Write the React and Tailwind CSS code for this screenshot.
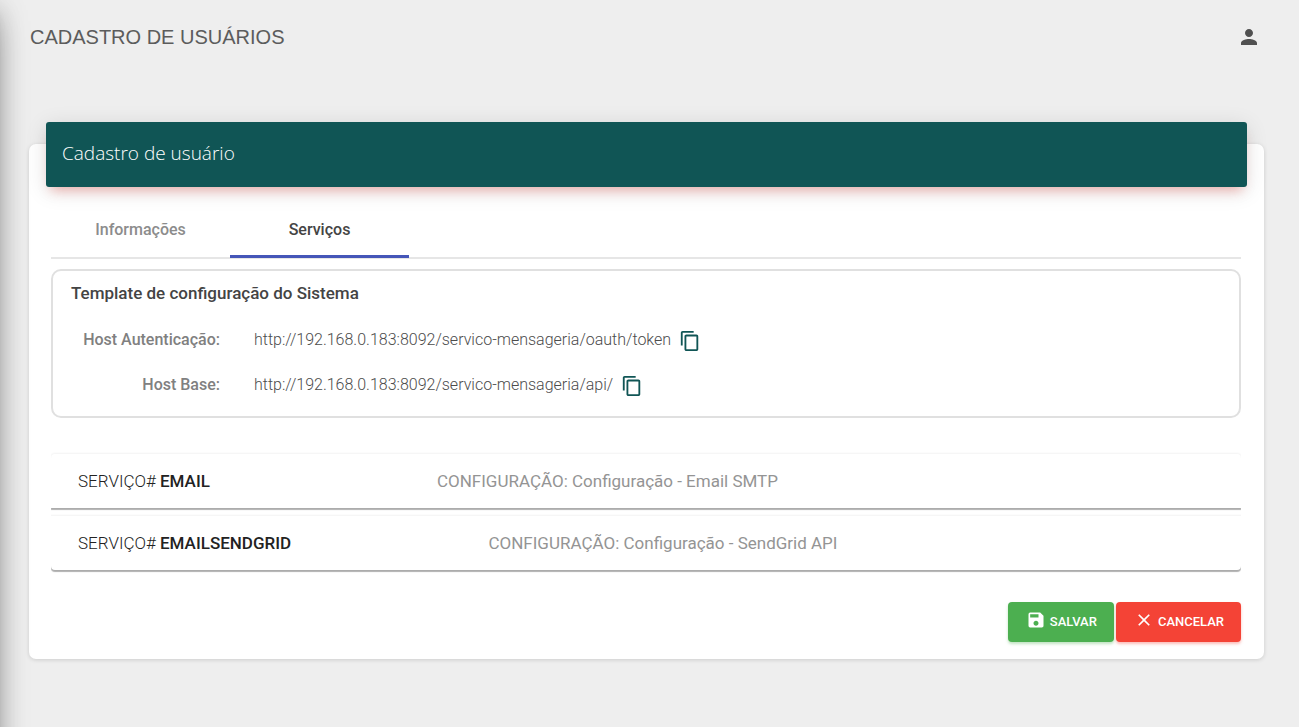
import React from "react";
import { MdPerson, MdSave, MdClose, MdContentCopy } from "react-icons/md";

const hosts = [
  { label: "Host Autenticação:", url: "http://192.168.0.183:8092/servico-mensageria/oauth/token" },
  { label: "Host Base:", url: "http://192.168.0.183:8092/servico-mensageria/api/" },
];

const services = [
  { name: "EMAIL", config: "Configuração - Email SMTP", shape: "rounded-t-[4px]" },
  { name: "EMAILSENDGRID", config: "Configuração - SendGrid API", shape: "rounded-b-[4px]" },
];

function TopBar() {
  return (
    <header className="flex h-[74px] items-center justify-between pl-[30px] pr-[38px]">
      <h1 className="font-['Liberation_Sans',sans-serif] text-[20px] leading-6 text-[#5c5c5c]">CADASTRO DE USUÁRIOS</h1>
      <button type="button" aria-label="Perfil" className="text-[#505050]">
        <MdPerson size={24} />
      </button>
    </header>
  );
}

function Tabs() {
  return (
    <div role="tablist" className="flex h-[55px] border-b-2 border-[#e6e6e6] text-[16px] font-medium">
      <button type="button" role="tab" aria-selected="false" className="w-[179px] pb-[2px] text-[#8c8c8c]">
        Informações
      </button>
      <button type="button" role="tab" aria-selected="true" className="-mb-px w-[179px] border-b-3 border-[#4556b8] text-[#444444]">
        Serviços
      </button>
    </div>
  );
}

function SystemTemplate() {
  return (
    <section className="mt-[10px] rounded-[10px] border-2 border-[#e0e0e0] pt-2 pb-[9px]">
      <h3 className="pl-[18px] text-[17px] leading-7 font-medium text-[#444444]">Template de configuração do Sistema</h3>
      <dl className="mt-[10px]">
        {hosts.map((host) => (
          <div key={host.label} className="flex h-[45px] items-center text-[16px]">
            <dt className="w-[167px] text-right font-medium text-[#808080]">{host.label}</dt>
            <dd className="ml-[34px] flex items-center gap-2 font-light text-[#4c4c4c]">
              {host.url}
              <button type="button" aria-label="Copiar" className="mt-[2px] text-[#105555]">
                <MdContentCopy size={22} />
              </button>
            </dd>
          </div>
        ))}
      </dl>
    </section>
  );
}

function ServiceList() {
  return (
    <div className="mt-9 flex flex-col gap-2 overflow-x-clip">
      {services.map((service) => (
        <button
          key={service.name}
          type="button"
          className={`flex h-[54px] w-full items-center bg-white px-[27px] pt-px text-left text-[17px] shadow-[0_2px_1px_0_rgba(0,0,0,0.3),0_0_2px_1px_rgba(0,0,0,0.05)] ${service.shape}`}
        >
          <span className="mr-[18px] grow font-light text-[#222222]">
            SERVIÇO# <strong className="font-medium">{service.name}</strong>
          </span>
          <span className="mr-[18px] grow-2 text-[#949494]">CONFIGURAÇÃO: {service.config}</span>
        </button>
      ))}
    </div>
  );
}

export default function App() {
  return (
    <div className="relative min-h-screen overflow-hidden bg-[#eeeeee] font-['Roboto',sans-serif]">
      <div
        aria-hidden="true"
        className="pointer-events-none absolute top-0 -bottom-10 -left-10 z-10 w-10 shadow-[0_11px_34px_-10px_rgba(0,0,0,0.56),0_4px_28px_0_rgba(0,0,0,0.12),0_9px_11px_-6px_rgba(0,0,0,0.2)]"
      />
      <TopBar />
      <main className="mt-[70px] mr-[35px] ml-[29px] rounded-[7px] bg-white pb-[17px] shadow-[0_1px_4px_0_rgba(0,0,0,0.14)]">
        <div className="mx-[17px] flex h-[65px] -translate-y-[22px] items-center rounded-[3px] bg-[#105555] px-4 pb-[3px] shadow-[0_4px_22px_0_rgba(0,0,0,0.12),0_8px_11px_-5px_rgba(244,67,54,0.35)]">
          <h2 className="font-['Open_Sans',sans-serif] text-[19px] font-light text-white">Cadastro de usuário</h2>
        </div>
        <div className="-mt-[5px] pr-[23px] pl-[22px]">
          <Tabs />
          <SystemTemplate />
          <ServiceList />
          <div className="mt-8 flex justify-end gap-[2px] text-[13px] font-medium text-white">
            <button type="button" className="flex h-10 items-center gap-1 rounded-[4px] bg-[#4caf50] pr-[17px] pl-[18px] shadow-[0_2px_3px_rgba(76,175,80,0.35)]">
              <MdSave size={20} className="mb-1" />
              SALVAR
            </button>
            <button type="button" className="flex h-10 items-center gap-1 rounded-[4px] bg-[#f44336] pr-[17px] pl-[18px] shadow-[0_2px_3px_rgba(244,67,54,0.35)]">
              <MdClose size={20} className="mb-1" />
              CANCELAR
            </button>
          </div>
        </div>
      </main>
    </div>
  );
}
